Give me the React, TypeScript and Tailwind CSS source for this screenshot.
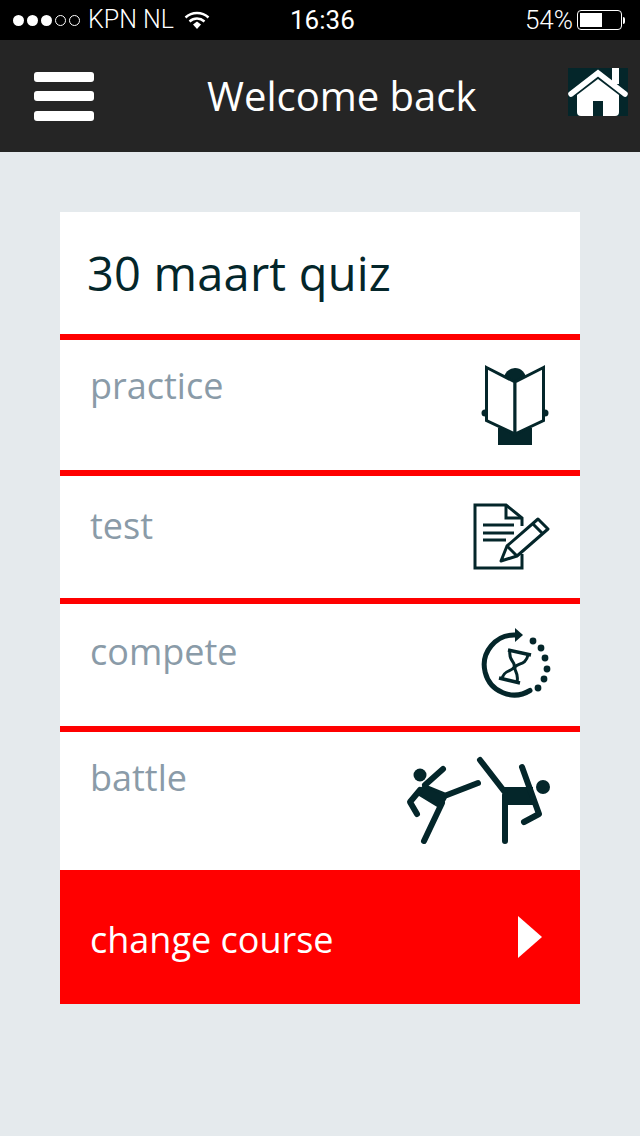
import React from "react";

const ink = "#04262a";

const BookIcon = () => (
  <svg width="110" height="110" viewBox="0 0 110 110" className="absolute right-[10px] top-[10px]">
    <circle cx="55" cy="29" r="11" fill={ink} />
    <circle cx="25" cy="63" r="3.500" fill={ink} />
    <circle cx="85" cy="63" r="3.500" fill={ink} />
    <rect x="38" y="78" width="34" height="17" fill={ink} />
    <polygon points="26.500,17.500 55,32 55,84 26.500,70.500" fill="#fff" stroke={ink} strokeWidth="3" />
    <polygon points="83.500,17.500 55,32 55,84 83.500,70.500" fill="#fff" stroke={ink} strokeWidth="3" />
  </svg>
);

const TestIcon = () => (
  <svg width="100" height="90" viewBox="0 0 100 90" className="absolute right-[20px] top-[14px]" fill="none" stroke={ink} strokeWidth="3">
    <path d="M62 36V28L46 15H15V78H62V64" />
    <path d="M46 15V28H62" />
    <path d="M23 35H54M23 43H54M23 50H46" />
    <path d="M78 29L88 39L57 66L41 71L47 56Z" strokeLinejoin="round" />
    <path d="M73 34L83 44M47 56L57 66" />
  </svg>
);

const CompeteIcon = () => (
  <svg width="100" height="90" viewBox="0 0 100 90" className="absolute right-[15px] top-[16px]" fill="none" stroke={ink}>
    <path d="M51 15A30 30 0 1 0 65 70.500" strokeWidth="5" strokeLinecap="round" />
    <polygon points="50,8 58,15 50,22" fill={ink} strokeWidth="0" />
    <g fill={ink} stroke="none">
      <circle cx="68" cy="21" r="3.400" />
      <circle cx="76" cy="28" r="3.400" />
      <circle cx="80" cy="38" r="3.400" />
      <circle cx="82" cy="49" r="3.400" />
      <circle cx="79" cy="59" r="3.400" />
      <circle cx="73" cy="68" r="3.400" />
    </g>
    <path d="M43 30L66 35M34 58L55 63" strokeWidth="3.500" />
    <path d="M45 30C43 42 51 41 49 47C47 52 39 49 37 59M63 35C61 45 53 43 50 47C49 52 54 52 52 62" strokeWidth="3" />
  </svg>
);

const BattleIcon = () => (
  <svg width="160" height="110" viewBox="0 0 160 110" className="absolute right-[20px] top-[13px]" fill="none" stroke={ink} strokeWidth="6" strokeLinecap="round" strokeLinejoin="round">
    <circle cx="20" cy="30" r="6.5" fill={ink} stroke="none" />
    <polygon points="25,41 47,50 40,62 17,48" fill={ink} strokeWidth="3" />
    <path d="M25 40L43 24M20 45L10 57L17 69M47 50L78 38M42 58L24 96" />
    <circle cx="143" cy="42" r="7" fill={ink} stroke="none" />
    <rect x="103" y="42" width="30" height="18" fill={ink} strokeWidth="0" />
    <path d="M80 15L104 46M105 50V96M122 22L139 69L124 77" />
  </svg>
);

const rows = [
  { label: "practice", height: "h-[136px]", pad: "pt-[26px]", icon: <BookIcon /> },
  { label: "test", height: "h-[128px]", pad: "pt-[30px]", icon: <TestIcon /> },
  { label: "compete", height: "h-[128px]", pad: "pt-[28px]", icon: <CompeteIcon /> },
  { label: "battle", height: "h-[144px]", pad: "pt-[26px]", icon: <BattleIcon /> },
];

const StatusBar = () => (
  <div className="flex h-10 items-center bg-black pl-[13px] pr-[15px] font-['Roboto',sans-serif] text-[25px] font-light text-white">
    <div className="flex gap-[3px]">
      <span className="h-[11px] w-[11px] rounded-full bg-white" />
      <span className="h-[11px] w-[11px] rounded-full bg-white" />
      <span className="h-[11px] w-[11px] rounded-full bg-white" />
      <span className="h-[11px] w-[11px] rounded-full border border-white" />
      <span className="h-[11px] w-[11px] rounded-full border border-white" />
    </div>
    <span className="ml-[8px] w-[96px]">KPN NL</span>
    <svg width="26" height="20" viewBox="0 0 26 20" fill="none" stroke="#fff" strokeWidth="2.4">
      <path d="M1.5 7.5C8 1.5 18 1.5 24.500 7.500" />
      <path d="M5.500 11.500C10 7.500 16 7.500 20.500 11.500" />
      <polygon points="9,14.500 13,11.500 17,14.500 13,19" fill="#fff" strokeWidth="0" />
    </svg>
    <span className="ml-[80px] text-[26px] font-normal">16:36</span>
    <span className="ml-auto text-[26px]">54%</span>
    <div className="ml-[4px] flex items-center">
      <div className="h-[20px] w-[45px] rounded-[4px] border border-white p-[2px]">
        <div className="h-full w-[22px] bg-white" />
      </div>
      <div className="ml-[1px] h-[7px] w-[2px] rounded-r-full bg-white" />
    </div>
  </div>
);

const NavBar = () => (
  <div className="flex h-[112px] items-center bg-[#252525] pl-[34px] pr-[12px]">
    <div className="flex w-[60px] flex-col gap-[9.5px]">
      <span className="h-[10px] rounded-[3px] bg-white" />
      <span className="h-[10px] rounded-[3px] bg-white" />
      <span className="h-[10px] rounded-[3px] bg-white" />
    </div>
    <div className="ml-[113px] text-[40px] leading-none text-white">Welcome back</div>
    <svg width="60" height="48" viewBox="0 0 60 48" className="ml-auto mt-[-8px] overflow-visible">
      <rect width="60" height="48" fill={ink} />
      <rect x="44" y="0" width="7" height="16" fill="#fff" />
      <path d="M3 26L30 5L57 26" fill="none" stroke="#fff" strokeWidth="5.5" strokeLinecap="round" />
      <path d="M30 11L51 27V44Q51 48 47 48H13Q9 48 9 44V27Z" fill="#fff" />
      <rect x="25" y="33" width="10" height="15" fill={ink} />
    </svg>
  </div>
);

export default function App() {
  return (
    <div className="flex min-h-[1136px] flex-col bg-[#e5eaed] font-['Open_Sans',sans-serif]">
      <StatusBar />
      <NavBar />
      <div className="mx-[60px] mt-[60px] bg-white">
        <div className="flex h-[122px] items-center pl-[27px] text-[47px] leading-none tracking-[0.2px] text-[#04262a]">30 maart quiz</div>
        {rows.map((row) => (
          <div key={row.label} className={`relative border-t-[6px] border-[#ff0000] pl-[30px] ${row.height} ${row.pad} text-[36px] leading-[40px] text-[#8a9ba8]`}>
            {row.label}
            {row.icon}
          </div>
        ))}
        <div className="flex h-[134px] items-center justify-between bg-[#ff0000] pl-[30px] pr-[38px] text-[36px] text-white">
          <span className="mt-[6px]">change course</span>
          <span className="h-0 w-0 border-y-[21px] border-l-[24px] border-y-transparent border-l-white" />
        </div>
      </div>
    </div>
  );
}
